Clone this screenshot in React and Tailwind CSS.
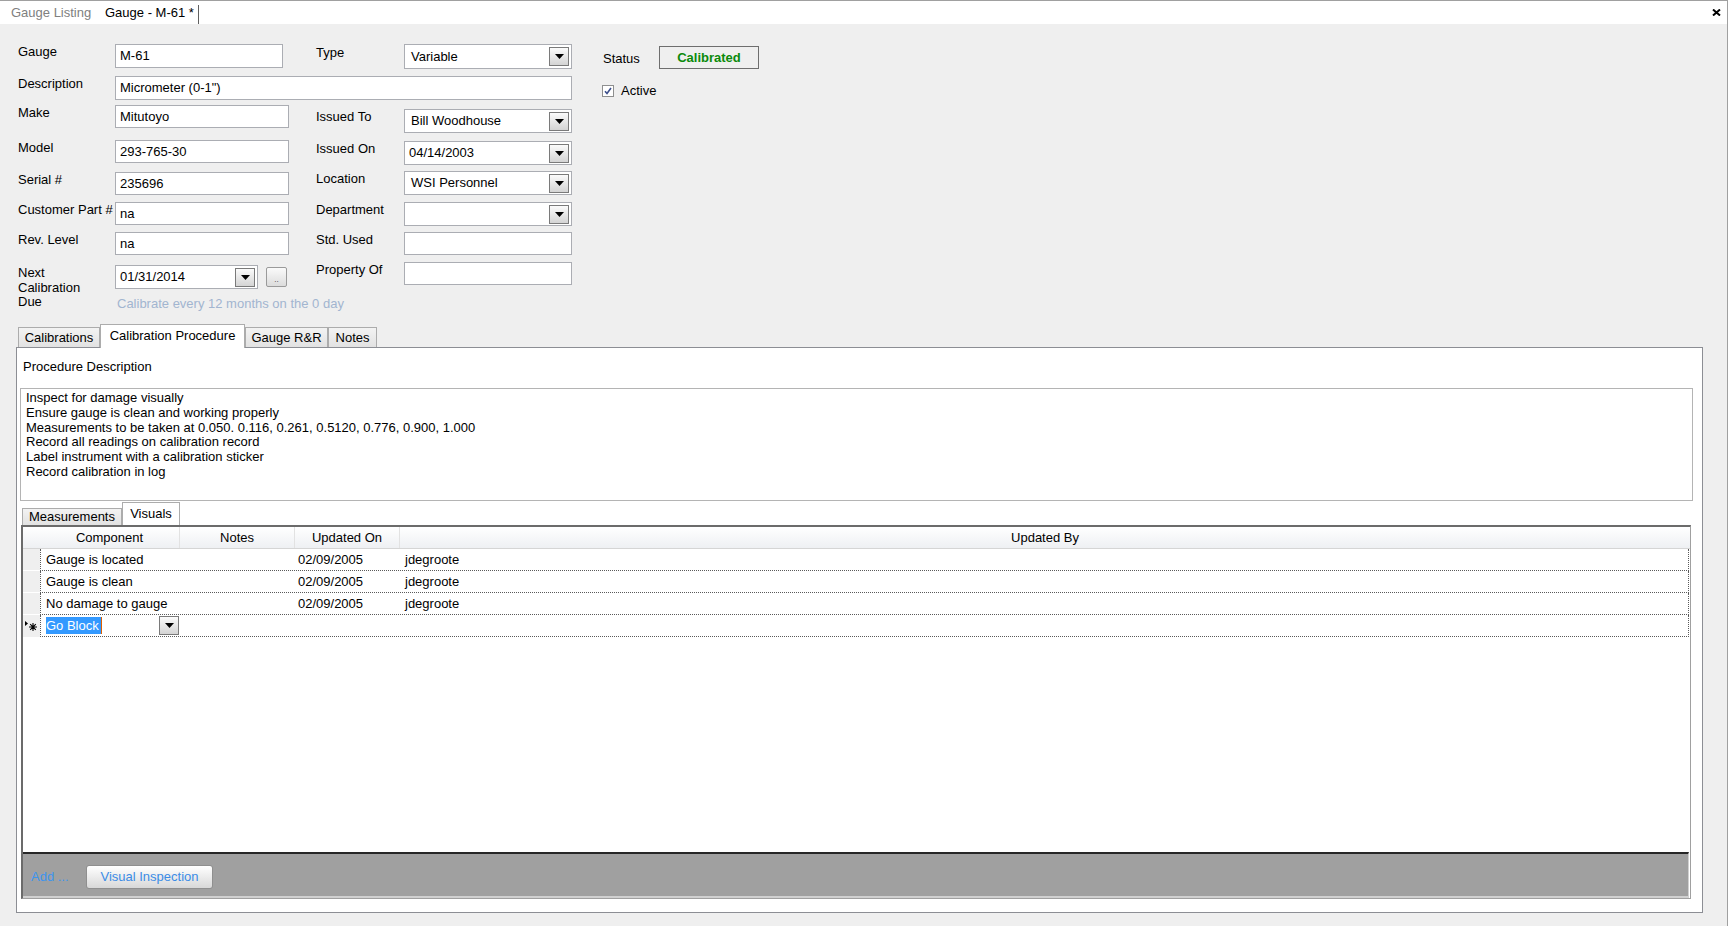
import React from "react";

function DropButton({ className = "" }) {
  return (
    <div
      className={`w-[20px] h-[19px] border border-[#7a7a7a] bg-linear-to-b from-[#fbfbfb] to-[#d4d4d4] flex items-center justify-center shrink-0 ${className}`}
    >
      <svg width="9" height="5" viewBox="0 0 9 5">
        <path d="M0 0h9L4.5 5z" fill="#000" />
      </svg>
    </div>
  );
}

function TextBox({ value, className = "" }) {
  return (
    <div className={`bg-white border border-[#abadb3] flex items-center pl-[4px] shrink-0 ${className}`}>{value}</div>
  );
}

function Combo({ value, className = "", pad = "pl-[6px]" }) {
  return (
    <div
      className={`h-[24px] bg-white border border-[#abadb3] flex items-center justify-between pr-[2px] shrink-0 ${pad} ${className}`}
    >
      <span>{value}</span>
      <DropButton />
    </div>
  );
}

function Tab({ label, active, className = "" }) {
  return active ? (
    <div
      className={`relative z-10 -mb-px bg-white border border-b-0 border-[#acacac] flex items-start justify-center pt-[3px] ${className}`}
    >
      {label}
    </div>
  ) : (
    <div
      className={`bg-linear-to-b from-[#f3f3f3] to-[#e2e2e2] border border-b-0 border-[#acacac] flex items-center justify-center ${className}`}
    >
      {label}
    </div>
  );
}

const rows = [
  { comp: "Gauge is located", on: "02/09/2005", by: "jdegroote" },
  { comp: "Gauge is clean", on: "02/09/2005", by: "jdegroote" },
  { comp: "No damage to gauge", on: "02/09/2005", by: "jdegroote" },
];

const procedure = [
  "Inspect for damage visually",
  "Ensure gauge is clean and working properly",
  "Measurements to be taken at 0.050. 0.116, 0.261, 0.5120, 0.776, 0.900, 1.000",
  "Record all readings on calibration record",
  "Label instrument with a calibration sticker",
  "Record calibration in log",
];

export default function App() {
  return (
    <div className="w-[1728px] h-[926px] bg-[#efefef] border-t border-r border-[#a0a0a0] text-[13px] leading-4 text-black font-['Liberation_Sans',Arial,sans-serif] flex flex-col overflow-hidden">
      {/* document tabs */}
      <div className="h-[23px] bg-white flex items-stretch shrink-0">
        <div className="w-[99px] pl-[11px] flex items-center text-[#808080]">Gauge Listing</div>
        <div className="w-[99px] pl-[6px] flex items-center">Gauge - M-61 *</div>
        <div className="w-px h-[19px] self-end bg-[#606060]" />
        <div className="flex-1" />
        <div className="flex items-center pr-[6px]">
          <svg width="9" height="7" viewBox="0 0 9 7">
            <path d="M1 0.5L8 6.5M8 0.5L1 6.5" stroke="#000" strokeWidth="2" />
          </svg>
        </div>
      </div>

      {/* form */}
      <div className="h-[300px] pt-[20px] pl-[18px] shrink-0">
        <div className="flex items-start h-[32px]">
          <div className="w-[97px] shrink-0">Gauge</div>
          <TextBox value="M-61" className="w-[168px] h-[24px]" />
          <div className="w-[88px] ml-[33px] pt-[1px] shrink-0">Type</div>
          <Combo value="Variable" className="w-[168px] h-[25px]" />
          <div className="w-[56px] ml-[31px] pt-[7px] shrink-0">Status</div>
          <div className="mt-[2px] w-[100px] h-[23px] border border-[#6e6e6e] flex items-center justify-center font-bold text-[#0b8a0b]">
            Calibrated
          </div>
        </div>

        <div className="flex items-start h-[29px]">
          <div className="w-[97px] shrink-0">Description</div>
          <TextBox value={'Micrometer (0-1")'} className="w-[457px] h-[24px]" />
          <div className="ml-[30px] mt-[7px] flex items-center gap-[7px]">
            <div className="w-[12px] h-[12px] border border-[#8e8f8f] bg-white flex items-center justify-center">
              <svg width="8" height="8" viewBox="0 0 8 8">
                <path d="M1 4.2L3 6.5L7 1" stroke="#3c4f8c" strokeWidth="1.6" fill="none" />
              </svg>
            </div>
            <span>Active</span>
          </div>
        </div>

        <div className="flex items-start">
          {/* left column */}
          <div className="w-[271px] shrink-0 flex flex-col">
            <div className="flex items-start h-[35px]">
              <div className="w-[97px] shrink-0">Make</div>
              <TextBox value="Mitutoyo" className="w-[174px] h-[23px]" />
            </div>
            <div className="flex items-start h-[32px]">
              <div className="w-[97px] shrink-0">Model</div>
              <TextBox value="293-765-30" className="w-[174px] h-[23px]" />
            </div>
            <div className="flex items-start h-[30px]">
              <div className="w-[97px] shrink-0">Serial #</div>
              <TextBox value="235696" className="w-[174px] h-[23px]" />
            </div>
            <div className="flex items-start h-[30px]">
              <div className="w-[97px] shrink-0 whitespace-nowrap">Customer Part #</div>
              <TextBox value="na" className="w-[174px] h-[23px]" />
            </div>
            <div className="flex items-start h-[33px]">
              <div className="w-[97px] shrink-0">Rev. Level</div>
              <TextBox value="na" className="w-[174px] h-[23px]" />
            </div>
            <div className="flex items-start">
              <div className="w-[97px] shrink-0 leading-[14.5px] pt-px">
                Next
                <br />
                Calibration
                <br />
                Due
              </div>
              <div className="flex flex-col">
                <div className="flex items-start">
                  <Combo value="01/31/2014" pad="pl-[4px]" className="w-[143px] h-[23px]" />
                  <div className="ml-[8px] mt-[2px] w-[21px] h-[20px] shrink-0 rounded-[2px] border border-[#9a9a9a] bg-linear-to-b from-[#fafafa] to-[#dcdcdc] flex items-end justify-center text-[8px] leading-[12px] text-[#333]">
                    ..
                  </div>
                </div>
                <div className="mt-[7px] pl-[2px] text-[#a2b5d0] whitespace-nowrap">
                  Calibrate every 12 months on the 0 day
                </div>
              </div>
            </div>
          </div>

          {/* middle column */}
          <div className="ml-[27px] mt-[4px] flex flex-col">
            <div className="flex items-start h-[32px]">
              <div className="w-[88px] shrink-0">Issued To</div>
              <Combo value="Bill Woodhouse" className="w-[168px]" />
            </div>
            <div className="flex items-start h-[30px]">
              <div className="w-[88px] shrink-0">Issued On</div>
              <Combo value="04/14/2003" pad="pl-[4px]" className="w-[168px]" />
            </div>
            <div className="flex items-start h-[31px]">
              <div className="w-[88px] shrink-0">Location</div>
              <Combo value="WSI Personnel" className="w-[168px]" />
            </div>
            <div className="flex items-start h-[30px]">
              <div className="w-[88px] shrink-0">Department</div>
              <Combo value="" className="w-[168px]" />
            </div>
            <div className="flex items-start h-[30px]">
              <div className="w-[88px] shrink-0">Std. Used</div>
              <TextBox value="" className="w-[168px] h-[23px]" />
            </div>
            <div className="flex items-start">
              <div className="w-[88px] shrink-0">Property Of</div>
              <TextBox value="" className="w-[168px] h-[23px]" />
            </div>
          </div>
        </div>
      </div>

      {/* main tabs */}
      <div className="h-[23px] pl-[18px] flex items-end shrink-0">
        <Tab label="Calibrations" className="w-[82px] h-[20px]" />
        <Tab label="Calibration Procedure" active className="w-[145px] h-[24px]" />
        <Tab label="Gauge R&R" className="w-[83px] h-[20px]" />
        <Tab label="Notes" className="w-[49px] h-[20px]" />
      </div>

      <div className="ml-[16px] w-[1687px] h-[566px] border border-[#8c8e94] bg-white flex flex-col shrink-0">
        <div className="pl-[6px] pt-[11px]">Procedure Description</div>
        <div className="mt-[13px] ml-[3px] w-[1673px] h-[113px] border border-[#b4b4b4] pl-[5px] pt-[2px] leading-[14.75px]">
          {procedure.map((l) => (
            <div key={l}>{l}</div>
          ))}
        </div>

        {/* sub tabs */}
        <div className="mt-px h-[23px] ml-[5px] flex items-end">
          <Tab label="Measurements" className="w-[100px] h-[17px]" />
          <div className="w-[58px] h-[23px] bg-white border border-b-0 border-[#acacac] flex items-start justify-center pt-[3px]">
            Visuals
          </div>
        </div>

        {/* grid */}
        <div className="ml-[4px] w-[1670px] h-[374px] border-t-2 border-l-2 border-r border-b border-[#6b6b6b] border-r-[#a0a0a0] border-b-[#a0a0a0] flex flex-col">
          <div className="h-[22px] flex border-b border-[#d5d5d5] bg-linear-to-b from-white to-[#eef0f3] shrink-0">
            <div className="w-[17px]" />
            <div className="w-[140px] flex items-center justify-center border-r border-[#e2e2e2]">Component</div>
            <div className="w-[115px] flex items-center justify-center border-r border-[#e2e2e2]">Notes</div>
            <div className="w-[105px] flex items-center justify-center border-r border-[#e2e2e2]">Updated On</div>
            <div className="flex-1 flex items-center justify-center">Updated By</div>
          </div>

          {rows.map((r) => (
            <div key={r.comp} className="h-[22px] flex shrink-0">
              <div className="w-[17px] bg-[#efefef] border-b border-white" />
              <div className="flex-1 mr-px flex border-l border-b border-r border-dotted border-[#5a5a5a]">
                <div className="w-[139px] pl-[5px] flex items-center">{r.comp}</div>
                <div className="w-[115px]" />
                <div className="w-[105px] pl-[3px] flex items-center">{r.on}</div>
                <div className="flex-1 pl-[5px] flex items-center">{r.by}</div>
              </div>
            </div>
          ))}

          <div className="h-[22px] flex shrink-0">
            <div className="w-[17px] bg-[#efefef] flex items-center pl-[2px]">
              <svg width="12" height="10" viewBox="0 0 12 10">
                <path d="M0 0L0 5L3 2.5Z" fill="#000" />
                <path d="M4 6H12M8 2V10M5.2 3.2L10.8 8.8M10.8 3.2L5.2 8.8" stroke="#000" strokeWidth="1.1" />
              </svg>
            </div>
            <div className="flex-1 mr-px flex border-l border-b border-r border-dotted border-[#5a5a5a]">
              <div className="w-[139px] flex items-center justify-between">
                <span className="ml-[5px] h-[17px] leading-[17px] bg-[#3399ff] text-white pr-[2px] border-r border-[#e06000]">
                  Go Block
                </span>
                <DropButton className="w-[19px] mr-px" />
              </div>
              <div className="w-[115px]" />
              <div className="w-[105px]" />
              <div className="flex-1" />
            </div>
          </div>

          <div className="flex-1" />

          <div className="h-[46px] shrink-0 bg-[#a0a0a0] border-t-2 border-[#262626] border-b-2 border-b-[#d0d0d0] border-r border-r-[#d0d0d0] mr-px flex items-center pl-[8px]">
            <div className="w-[55px] mt-[4px] text-[#3d95ee]">Add ...</div>
            <div className="w-[127px] h-[24px] mt-[3px] rounded-[3px] border border-[#8f8f8f] bg-linear-to-b from-white to-[#d8d8d8] text-[#3b8ce6] flex items-center justify-center">
              Visual Inspection
            </div>
          </div>
        </div>
      </div>
    </div>
  );
}
